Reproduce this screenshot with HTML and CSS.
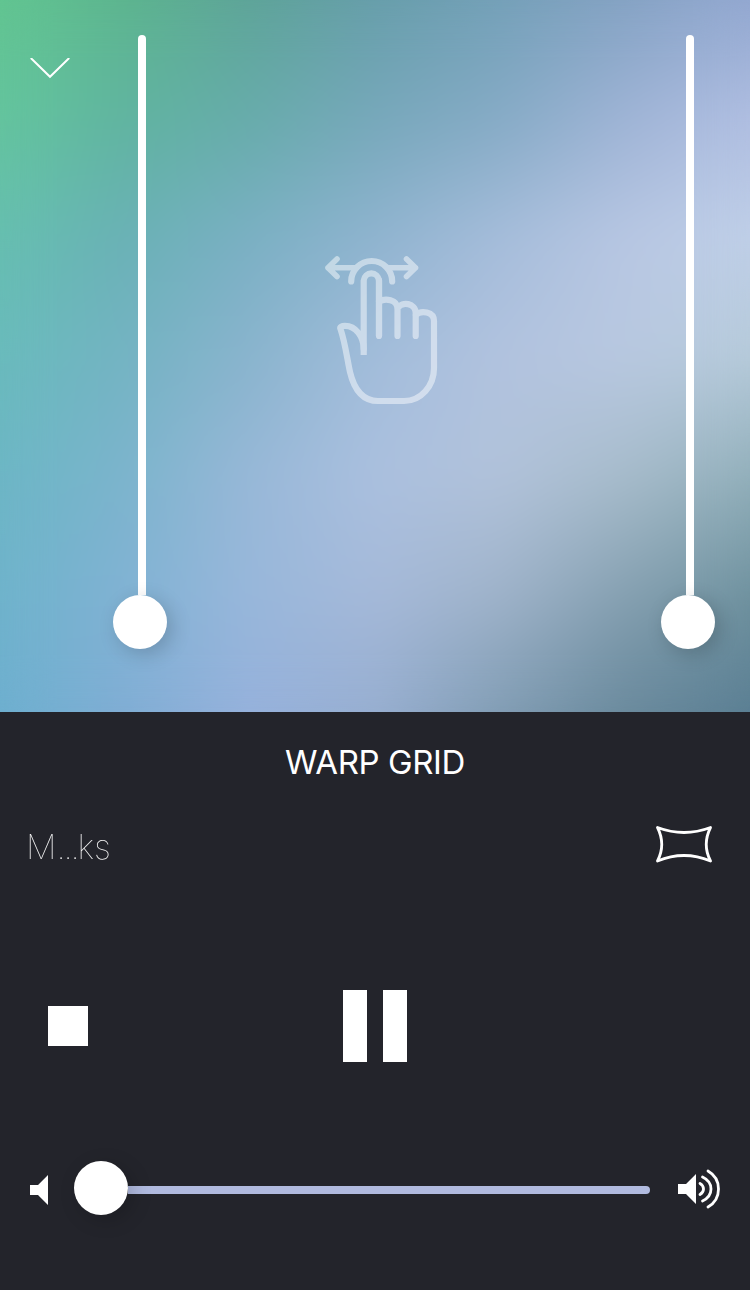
FILE: index.html
```
<!DOCTYPE html>
<html lang="en">
<head>
  <meta charset="UTF-8" />
  <meta name="viewport" content="width=device-width, initial-scale=1" />
  <title>Warp Grid</title>
  <link rel="stylesheet" href="styles.css">
</head>
<body>
  <div class="pad">
    <div class="mesh">
      <div class="band band-1"></div>
      <div class="band band-2"></div>
      <div class="band band-3"></div>
      <div class="band band-4"></div>
      <div class="band band-5"></div>
      <div class="band band-6"></div>
      <div class="band band-7"></div>
      <div class="soften"></div>
    </div>

    <svg class="chevron" width="40" height="22" viewBox="0 0 40 22">
      <path d="M0.8 0 L20 18.800 L39.200 0" fill="none" stroke="#fff" stroke-width="2" />
    </svg>

    <div class="slider">
      <div class="track"></div>
      <div class="knob"></div>
    </div>

    <svg class="swipe" width="126" height="166" viewBox="0 0 126 166">
      <g fill="none" stroke="#fff" stroke-width="6.200" stroke-linecap="round" stroke-linejoin="round">
        <path d="M17 9 L8 17.800 L17 26.600 M8 17.800 H35 M69 17.800 H95.500 M86.500 9 L95.500 17.800 L86.500 26.600" stroke-width="5.600" />
        <path d="M31.200 31.500 A20.400 20.400 0 0 1 72.200 31.500" />
        <path d="M43.700 105 V30.500 A7.700 8 0 0 1 59 30.500 V86" stroke-linecap="butt" />
        <path d="M59 30 V86 M59 51.500 C65 48 77.500 49 77.500 59 V86 M77.500 58 C82 51 95.700 53 95.700 63 V86 M95.700 65 C101 60 114 61.500 114 71 V118 C114 136 101 151 84 151 H58 C42 151 34 139 30 122 C27 108 25 92 20.500 79 C19.500 77 22 75.800 25 75.800 C36 75.800 43.700 87 43.700 99" />
      </g>
    </svg>

    <div class="slider">
      <div class="track"></div>
      <div class="knob"></div>
    </div>
  </div>

  <div class="panel">
    <h1>WARP GRID</h1>

    <div class="info">
      <span class="song">M<span class="dots">...</span>ks</span>
      <svg class="warp" width="56" height="38" viewBox="0 0 56 38">
        <path d="M1.500 1.500 Q28 11.500 54.500 1.500 Q46 18.500 54.500 35 Q28 24 1.500 35 Q10 18.500 1.500 1.500 Z" fill="none" stroke="#fff" stroke-width="2.800" stroke-linejoin="round" />
      </svg>
    </div>

    <div class="controls">
      <div class="stop"></div>
      <div class="pause">
        <div class="bar"></div>
        <div class="bar"></div>
      </div>
    </div>

    <div class="volume">
      <svg width="18" height="30" viewBox="0 0 18 30">
        <path d="M0 10 H8 L18 0 V30 L8 20 H0 Z" fill="#fff" />
      </svg>
      <div class="volume-slider">
        <div class="knob"></div>
        <div class="volume-track"></div>
      </div>
      <svg class="loud" width="42" height="40" viewBox="0 0 42 40">
        <path d="M0 15 H8 L18 5 V35 L8 25 H0 Z" fill="#fff" />
        <path d="M22 14.500 Q25.500 16.500 25.500 20 Q25.500 23.500 22 25.500 M24.500 8 Q33 12 33 20 Q33 28 24.500 32 M30 2 Q40.500 8 40.500 20 Q40.500 32 30 38" fill="none" stroke="#fff" stroke-width="2.800" stroke-linecap="round" />
      </svg>
    </div>
  </div>
</body>
</html>
```
FILE: styles.css
```
* {
  box-sizing: border-box;
}

body {
  margin: 0;
  width: 750px;
  height: 1290px;
  background: #23242b;
  color: #fff;
  font-family: Inter, 'Liberation Sans', sans-serif;
  overflow: hidden;
}

svg {
  display: block;
  flex-shrink: 0;
}

.pad {
  position: relative;
  display: flex;
  align-items: flex-start;
  height: 712px;
}

/* Colour mesh: each band fades in over the one above it */
.mesh {
  position: absolute;
  inset: 0;
}

.band,
.soften {
  position: absolute;
  inset: 0;
}

.soften {
  backdrop-filter: blur(24px);
}

.band-1 {
  background: linear-gradient(90deg, #62c691, #5db58e, #5ea498, #679eaa, #74a0b8, #84a2c3, #93a8d1);
}

.band-2 {
  background: linear-gradient(90deg, #64c59e, #60b4a0, #67acab, #77a8bb, #86abc6, #9fb4d6, #b1bfe2);
  mask-image: linear-gradient(transparent 0, #000 120px);
}

.band-3 {
  background: linear-gradient(90deg, #66bfb0, #6ab1b6, #7bb0c4, #90b4d0, #a6bddb, #b8c7e3, #c0d0e8);
  mask-image: linear-gradient(transparent 120px, #000 240px);
}

.band-4 {
  background: linear-gradient(90deg, #69bbbc, #74b3c3, #8ab4ce, #a3bddb, #b2c3df, #b8c8e0, #b5cad9);
  mask-image: linear-gradient(transparent 240px, #000 360px);
}

.band-5 {
  background: linear-gradient(90deg, #6cb6c5, #7cb4cd, #98b8d8, #abc0df, #b1c2da, #a6bbca, #90aeb9);
  mask-image: linear-gradient(transparent 360px, #000 480px);
}

.band-6 {
  background: linear-gradient(90deg, #6eb3cb, #81b2d4, #98b7db, #a5b9d9, #9eb2c9, #849fb0, #6d909d);
  mask-image: linear-gradient(transparent 480px, #000 600px);
}

.band-7 {
  background: linear-gradient(90deg, #6dafcf, #80add4, #96b1dc, #97aed0, #809cb3, #69899c, #5a7e93);
  mask-image: linear-gradient(transparent 600px, #000 712px);
}

.chevron {
  position: relative;
  margin: 58px 43px 0 30px;
}

.slider {
  position: relative;
  display: flex;
  flex-direction: column;
  width: 54px;
  padding-top: 35px;
}

.track {
  width: 8px;
  height: 560px;
  margin-left: 25px;
  border-radius: 4px 4px 0 0;
  background: #fff;
}

.knob {
  position: relative;
  width: 54px;
  height: 54px;
  flex-shrink: 0;
  border-radius: 50%;
  background: #fff;
  box-shadow: 5px 5px 20px rgba(0, 0, 0, 0.18);
}

.swipe {
  position: relative;
  margin: 250px 215px 0 153px;
  opacity: 0.48;
}

.panel {
  height: 578px;
  padding: 0 30px;
}

h1 {
  margin: 0;
  padding-top: 30px;
  font-size: 33px;
  font-weight: 400;
  line-height: 40px;
  letter-spacing: -0.4px;
  text-align: center;
}

.info {
  display: flex;
  justify-content: space-between;
  align-items: center;
  height: 40px;
  margin: 44px 8px 0 -4px;
}

.song {
  font-size: 34px;
  font-weight: 100;
  opacity: 0.95;
}

.dots {
  letter-spacing: -2.2px;
}

.warp {
  margin-top: -2px;
}

.controls {
  display: flex;
  align-items: center;
  height: 72px;
  margin: 124px 0 0 18px;
}

.stop {
  width: 40px;
  height: 40px;
  background: #fff;
}

.pause {
  display: flex;
  gap: 16px;
  margin-left: 255px;
}

.bar {
  width: 24px;
  height: 72px;
  background: #fff;
}

.volume {
  display: flex;
  align-items: center;
  height: 54px;
  margin-top: 101px;
}

.volume-slider {
  display: flex;
  align-items: center;
  width: 576px;
  margin: 0 28px 0 26px;
}

.volume-slider .knob {
  margin-top: -4px;
}

.volume-track {
  width: 522px;
  height: 8px;
  border-radius: 0 4px 4px 0;
  background: #b0badf;
}

.loud {
  margin-top: -2px;
}
```
